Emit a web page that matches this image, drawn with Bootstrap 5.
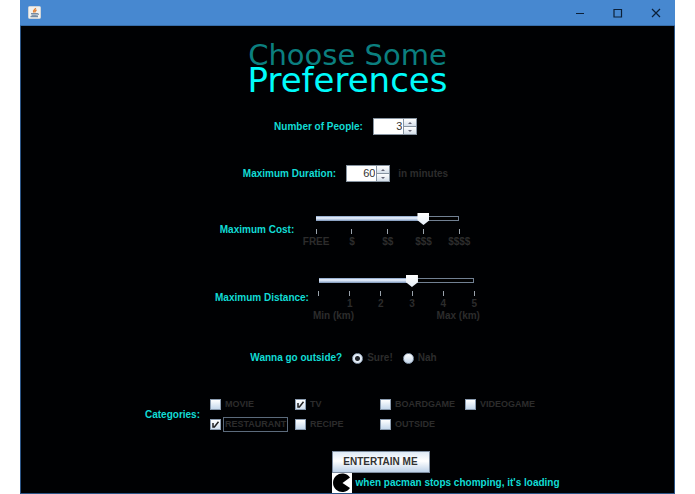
<!DOCTYPE html>
<html lang="en">
<head>
<meta charset="utf-8">
<meta name="viewport" content="width=device-width, initial-scale=1">
<title>Choose Some Preferences</title>
<link href="https://cdn.jsdelivr.net/npm/bootstrap@5.3.0/dist/css/bootstrap.min.css" rel="stylesheet">
<style>
body{background:#fff;font:bold 10px/12px "Liberation Sans",Arial,sans-serif;color:#2c2c2c;padding:0 20px}
.app-window{background:#000103;border:1px solid #2c5586;border-top:0}
.title-bar{background:#4788d0;height:26px;border-bottom:1px solid #376da9;margin:0 -1px}
.win-btn{width:38px;color:#0c2038;background:none;border:0;padding:0}
.heading{font:29px/26px "DejaVu Sans",sans-serif;color:#0b7f7f;margin-top:16px}
.heading strong{font-size:34px;line-height:25px;font-weight:400;color:#00fbfb}
.cyan{color:#12dcd5}
.form-line{margin-top:30px}
.form-line-close{margin-top:26px}
.form-line-first{margin-top:25px}
.form-line-wide{margin-top:33px}
.gap-label{margin-right:10px}
.spin{width:44px;height:17px;border:1px solid #8794a1;background:#fff}
.spin input{font:11px/15px "Liberation Sans",Arial,sans-serif;color:#333;border:0;padding:0 1px 0 0;width:30px;min-width:0;text-align:right;background:transparent;outline-offset:-1px}
.spin-btns{width:13px;border-left:1px solid #8794a1}
.spin-btns button{border:0;padding:0;background:linear-gradient(#fff,#d5dfea);line-height:0}
.spin-btns button+button{border-top:1px solid #8794a1}
.slide-box{padding:0 6px}
.slide-cost,.slide-dist{width:167px}
.slider{appearance:none;display:block;width:100%;height:13px;margin:0;background:transparent}
.slider::-webkit-slider-runnable-track{height:5px;background:
 linear-gradient(#7b98c0,#edf4ff 35%,#c9d9ee 60%,#7892b6) 6px 0/calc((100% - 12px)*var(--part)) 5px no-repeat,
 linear-gradient(#000,#000) 7px 1px/calc(100% - 14px) 3px no-repeat,
 linear-gradient(#718092,#718092) 6px 0/calc(100% - 12px) 5px no-repeat}
.slider::-webkit-slider-thumb{appearance:none;width:12px;height:12px;margin-top:-3px;border:0;background:linear-gradient(#fff,#e6eef8);clip-path:polygon(0 0,100% 0,100% 60%,50% 100%,0 60%)}
.ticks{display:grid;grid-auto-flow:column;grid-auto-columns:1fr;margin-top:4px;text-align:center}
.ticks span::before{content:"";display:block;width:1px;height:5px;margin:0 auto 2px;background:#9aa3ac}
.ticks-five{margin-inline:-12px}
.ticks-six{margin-inline:-10px}
.pick{appearance:none;flex:none;width:11px;height:11px;margin:0;border:1px solid #8b9cb0;background:linear-gradient(#fff,#c5d8ec)}
.pick:checked{background:url("data:image/svg+xml,%3Csvg xmlns='http://www.w3.org/2000/svg' viewBox='0 0 9 9'%3E%3Cpath d='M2 3v4h1.400L7.500 1.800' fill='none' stroke='%23222' stroke-width='1.500'/%3E%3C/svg%3E") center/9px,linear-gradient(#fff,#d2e0ef)}
.pick-round{border-radius:50%}
.pick-round:checked{background:radial-gradient(circle,#20242b 0 2px,#e4edf7 3px)}
.cats{display:grid;grid-template-columns:repeat(4,85px);row-gap:5px;font-size:9px}
.cats label{border:1px solid transparent;line-height:13px;margin-left:2px;padding:0 1px}
.cats .focused{border-color:#5c6b7c}
.go-area{margin:19px 0 0 calc(50% - 16px)}
.go{height:22px;width:98px;padding:0;border:1px solid #7d8c9f;color:#333;font-weight:700;background:linear-gradient(#dfeaf6,#fff 45%,#bdd1e8)}
.pac{width:20px;height:20px;background:#fff;flex:none}
</style>
<script src="https://cdn.jsdelivr.net/npm/bootstrap@5.3.0/dist/js/bootstrap.bundle.min.js"></script>
</head>
<body class="d-flex min-vh-100">
<div class="app-window flex-grow-1 d-flex flex-column">
  <header class="title-bar d-flex align-items-stretch">
    <svg class="ms-2 my-auto" width="13" height="13" viewBox="0 0 13 13" aria-hidden="true"><rect x=".5" y=".5" width="12" height="12" rx="1" fill="#f1f1ee" stroke="#cfd4d8"/><path d="M7.500 2C8 3.500 4.500 4 5.700 6.500M8.500 4C6.500 5 7 5.500 7 6.500" fill="none" stroke="#e3873c" stroke-width="1.400"/><path d="M3 7.700h6M3.500 9.200h5M2.500 10.700h7.500M9 7.500c2.500 0 1.500 1.700-.500 1.700" fill="none" stroke="#587390"/></svg>
    <div class="ms-auto d-flex">
      <button type="button" class="win-btn" aria-label="Minimize"><svg width="10" height="10" viewBox="0 0 10 10"><path d="M1 5.500h8" stroke="currentColor"/></svg></button>
      <button type="button" class="win-btn" aria-label="Maximize"><svg width="10" height="10" viewBox="0 0 10 10"><path d="M1 1.500h7.500v7.500h-7.500z" fill="none" stroke="currentColor" stroke-width="1.200"/></svg></button>
      <button type="button" class="win-btn" aria-label="Close"><svg width="10" height="10" viewBox="0 0 10 10"><path d="M1 1l8 8M9 1l-8 8" stroke="currentColor" stroke-width="1.200"/></svg></button>
    </div>
  </header>
  <main>
    <h1 class="heading text-center mb-0">Choose Some<strong class="d-block">Preferences</strong></h1>
    <form>
      <div class="form-line form-line-first d-flex justify-content-center align-items-center pe-1">
        <label class="cyan gap-label" for="people">Number of People:</label>
        <div class="spin d-flex">
          <input id="people" type="text" inputmode="numeric" value="3">
          <div class="spin-btns d-flex flex-column">
            <button type="button" class="flex-fill" data-step="1" aria-label="More people"><svg width="4" height="2" viewBox="0 0 4 2"><path d="M0 2l2-2 2 2z" fill="#667"/></svg></button>
            <button type="button" class="flex-fill" data-step="-1" aria-label="Fewer people"><svg width="4" height="2" viewBox="0 0 4 2"><path d="M0 0l2 2 2-2z" fill="#667"/></svg></button>
          </div>
        </div>
      </div>
      <div class="form-line d-flex justify-content-center align-items-center pe-1">
        <label class="cyan gap-label" for="duration">Maximum Duration:</label>
        <div class="spin d-flex me-2">
          <input id="duration" type="text" inputmode="numeric" value="60">
          <div class="spin-btns d-flex flex-column">
            <button type="button" class="flex-fill" data-step="1" aria-label="Longer"><svg width="4" height="2" viewBox="0 0 4 2"><path d="M0 2l2-2 2 2z" fill="#667"/></svg></button>
            <button type="button" class="flex-fill" data-step="-1" aria-label="Shorter"><svg width="4" height="2" viewBox="0 0 4 2"><path d="M0 0l2 2 2-2z" fill="#667"/></svg></button>
          </div>
        </div>
        <span>in minutes</span>
      </div>
      <div class="form-line d-flex justify-content-center align-items-center pe-1">
        <label class="cyan gap-label" for="cost">Maximum Cost:</label>
        <div class="slide-box slide-cost">
          <input class="slider" id="cost" type="range" min="0" max="4" value="3" style="--part:.75">
          <div class="ticks ticks-five"><span>FREE</span><span>$</span><span>$$</span><span>$$$</span><span>$$$$</span></div>
        </div>
      </div>
      <div class="form-line form-line-close d-flex justify-content-center align-items-center">
        <label class="cyan me-1" for="distance">Maximum Distance:</label>
        <div class="slide-dist">
          <input class="slider" id="distance" type="range" min="0" max="5" value="3" style="--part:.6">
          <div class="ticks ticks-six"><span></span><span>1</span><span>2</span><span>3</span><span>4</span><span>5</span></div>
          <div class="d-flex justify-content-between"><span>Min (km)</span><span>Max (km)</span></div>
        </div>
      </div>
      <div class="form-line d-flex justify-content-center align-items-center pe-2" role="radiogroup" aria-labelledby="outq">
        <span class="cyan gap-label" id="outq">Wanna go outside?</span>
        <input class="pick pick-round" type="radio" name="out" id="sure" checked><label class="ms-1 gap-label" for="sure">Sure!</label>
        <input class="pick pick-round" type="radio" name="out" id="nah"><label class="ms-1" for="nah">Nah</label>
      </div>
      <div class="form-line form-line-wide d-flex justify-content-center align-items-center" role="group" aria-labelledby="catq">
        <span class="cyan gap-label" id="catq">Categories:</span>
        <div class="cats">
          <div class="d-flex align-items-center"><input class="pick" type="checkbox" id="c1"><label for="c1">MOVIE</label></div>
          <div class="d-flex align-items-center"><input class="pick" type="checkbox" id="c2" checked><label for="c2">TV</label></div>
          <div class="d-flex align-items-center"><input class="pick" type="checkbox" id="c3"><label for="c3">BOARDGAME</label></div>
          <div class="d-flex align-items-center"><input class="pick" type="checkbox" id="c4"><label for="c4">VIDEOGAME</label></div>
          <div class="d-flex align-items-center"><input class="pick" type="checkbox" id="c5" checked><label class="focused" for="c5">RESTAURANT</label></div>
          <div class="d-flex align-items-center"><input class="pick" type="checkbox" id="c6"><label for="c6">RECIPE</label></div>
          <div class="d-flex align-items-center"><input class="pick" type="checkbox" id="c7"><label for="c7">OUTSIDE</label></div>
        </div>
      </div>
      <div class="go-area">
        <button type="button" class="go d-block">ENTERTAIN ME</button>
        <div class="d-flex align-items-center">
          <svg class="pac" viewBox="0 0 20 20" aria-hidden="true"><path d="M10.500 10L18 4.500A9.300 9.300 0 1 0 18 15Z" fill="#000"/></svg>
          <span class="cyan ms-1">when pacman stops chomping, it's loading</span>
        </div>
      </div>
    </form>
  </main>
</div>
<script>
document.querySelectorAll('[data-step]').forEach(b=>b.addEventListener('click',()=>{
  const field=b.closest('.spin').querySelector('input');
  field.value=Math.max(0,(parseInt(field.value,10)||0)+Number(b.dataset.step));
}));
document.querySelectorAll('.slider').forEach(s=>s.addEventListener('input',()=>s.style.setProperty('--part',s.value/s.max)));
</script>
</body>
</html>
